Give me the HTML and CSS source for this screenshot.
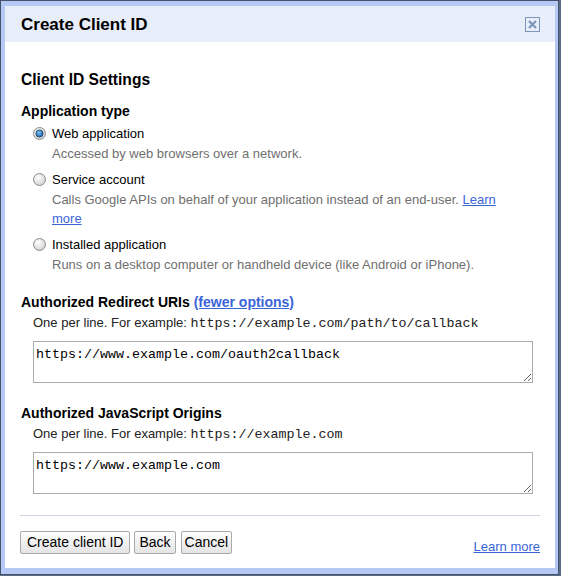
FILE: index.html
```html
<!DOCTYPE html>
<html>
<head>
<meta charset="utf-8">
<link rel="stylesheet" href="styles.css">
</head>
<body>
<div class="dialog">
  <div class="inner">
    <div class="header">
      <div class="title">Create Client ID</div>
      <div class="close">
        <svg width="15" height="15" viewBox="0 0 15 15">
          <rect x="0.5" y="0.5" width="14" height="14" fill="none" stroke="#7d95bb"/>
          <path d="M4 4 L11 11 M11 4 L4 11" stroke="#7d95bb" stroke-width="2.2"/>
        </svg>
      </div>
    </div>
    <div class="content">
      <h2 class="section-title">Client ID Settings</h2>
      <h3 class="label">Application type</h3>
      <div class="options">
        <div class="option">
          <div class="opt-row">
            <svg class="radio" width="13" height="13" viewBox="0 0 13 13">
              <defs>
                <radialGradient id="rg1" cx="0.4" cy="0.35" r="0.7">
                  <stop offset="0" stop-color="#ffffff"/>
                  <stop offset="1" stop-color="#cfcfcf"/>
                </radialGradient>
                <radialGradient id="bd" cx="0.4" cy="0.35" r="0.7">
                  <stop offset="0" stop-color="#7cc4f4"/>
                  <stop offset="1" stop-color="#1160b0"/>
                </radialGradient>
              </defs>
              <circle cx="6.5" cy="6.5" r="6" fill="url(#rg1)" stroke="#8c8c8c"/>
              <circle cx="6.5" cy="6.5" r="3.6" fill="url(#bd)" stroke="#27435f" stroke-width="0.9"/>
            </svg>
            <span class="opt-label">Web application</span>
          </div>
          <div class="desc">Accessed by web browsers over a network.</div>
        </div>
        <div class="option">
          <div class="opt-row">
            <svg class="radio" width="13" height="13" viewBox="0 0 13 13">
              <circle cx="6.5" cy="6.5" r="6" fill="url(#rg1)" stroke="#8c8c8c"/>
            </svg>
            <span class="opt-label">Service account</span>
          </div>
          <div class="desc">Calls Google APIs on behalf of your application instead of an end-user. <a href="#" class="link">Learn</a> <a href="#" class="link">more</a></div>
        </div>
        <div class="option">
          <div class="opt-row">
            <svg class="radio" width="13" height="13" viewBox="0 0 13 13">
              <circle cx="6.5" cy="6.5" r="6" fill="url(#rg1)" stroke="#8c8c8c"/>
            </svg>
            <span class="opt-label">Installed application</span>
          </div>
          <div class="desc">Runs on a desktop computer or handheld device (like Android or iPhone).</div>
        </div>
      </div>

      <h3 class="label label-gap">Authorized Redirect URIs <a href="#" class="link">(fewer options)</a></h3>
      <div class="hint">One per line. For example: <code class="mono">https://example.com/path/to/callback</code></div>
      <textarea class="field">https://www.example.com/oauth2callback</textarea>

      <h3 class="label label-gap2">Authorized JavaScript Origins</h3>
      <div class="hint">One per line. For example: <code class="mono">https://example.com</code></div>
      <textarea class="field">https://www.example.com</textarea>
    </div>
    <div class="footer">
      <div class="separator"></div>
      <div class="actions">
        <div class="buttons">
          <button class="btn btn-primary">Create client ID</button>
          <button class="btn">Back</button>
          <button class="btn btn-cancel">Cancel</button>
        </div>
        <a href="#" class="link learn">Learn more</a>
      </div>
    </div>
  </div>
</div>
</body>
</html>
```
FILE: styles.css
```css
html, body {
  margin: 0;
  padding: 0;
}
body {
  background: #5d6d86;
  width: 561px;
  height: 576px;
  font-family: "Liberation Sans", Arial, sans-serif;
  color: #000;
}
.dialog {
  width: 559px;
  height: 575px;
  box-sizing: border-box;
  border: 1px solid #44546e;
  background: #b6c8f4;
  padding: 5px 3px 6px 4px;
}
.inner {
  background: #fff;
  height: 100%;
  display: flex;
  flex-direction: column;
}
.header {
  height: 36px;
  background: #e8edfa;
  display: flex;
  align-items: center;
  justify-content: space-between;
  padding: 0 15px 0 16px;
}
.title {
  font-size: 17px;
  font-weight: bold;
  line-height: 20px;
  padding-top: 1px;
}
.close {
  width: 15px;
  height: 15px;
  display: flex;
  margin-top: 1px;
}
.content {
  padding: 0 15px 0 16px;
  display: flex;
  flex-direction: column;
}
.section-title {
  margin: 28px 0 0 0;
  font-size: 15.6px;
  line-height: 20px;
  font-weight: bold;
}
.label {
  margin: 12px 0 0 0;
  font-size: 14px;
  line-height: 18px;
  font-weight: bold;
}
.label-gap { margin-top: 19px; }
.label-gap2 { margin-top: 21px; }
.options {
  margin: 4px 0 0 12px;
  display: flex;
  flex-direction: column;
  gap: 7px;
}
.opt-row {
  display: flex;
  align-items: center;
  gap: 6px;
  height: 19px;
  font-size: 13px;
}
.radio {
  flex: none;
}
.opt-label {
  line-height: 19px;
}
.desc {
  margin: 1px 0 0 19px;
  font-size: 13px;
  line-height: 19px;
  color: #6f6f6f;
  max-width: 460px;
}
.link {
  color: #3a64d8;
  text-decoration: underline;
}
.hint {
  margin: 2px 0 0 12px;
  font-size: 13px;
  line-height: 19px;
  height: 19px;
  color: #222;
}
.mono {
  font-family: "Liberation Mono", "Courier New", monospace;
  font-size: 13.33px;
  line-height: 1;
}
.field {
  display: block;
  margin: 9px 0 0 12px;
  width: 500px;
  height: 42px;
  box-sizing: border-box;
  border: 1px solid #ababab;
  padding: 5px 2px 0 2px;
  font-family: "Liberation Mono", "Courier New", monospace;
  font-size: 13.33px;
  line-height: 16px;
  color: #000;
  background: #fff;
  resize: both;
  outline: none;
}
.footer {
  padding: 0 15px 0 15px;
}
.separator {
  margin-top: 21px;
  height: 1px;
  background: #cdd5e4;
}
.actions {
  margin-top: 15px;
  display: flex;
  justify-content: space-between;
  align-items: flex-end;
}
.buttons {
  display: flex;
  gap: 4px;
}
.btn {
  height: 23px;
  padding: 0 4px;
  font-family: "Liberation Sans", Arial, sans-serif;
  font-size: 14px;
  color: #000;
  border: 1px solid #a9a9a9;
  border-radius: 2px;
  background: linear-gradient(#fefefe, #e4e4e4);
  line-height: 21px;
}
.btn-primary {
  padding: 0 6px;
}
.btn-cancel {
  margin-left: 1px;
  padding: 0 3px;
}
.learn {
  font-size: 13px;
  line-height: 16px;
  margin-bottom: -1px;
}
```
